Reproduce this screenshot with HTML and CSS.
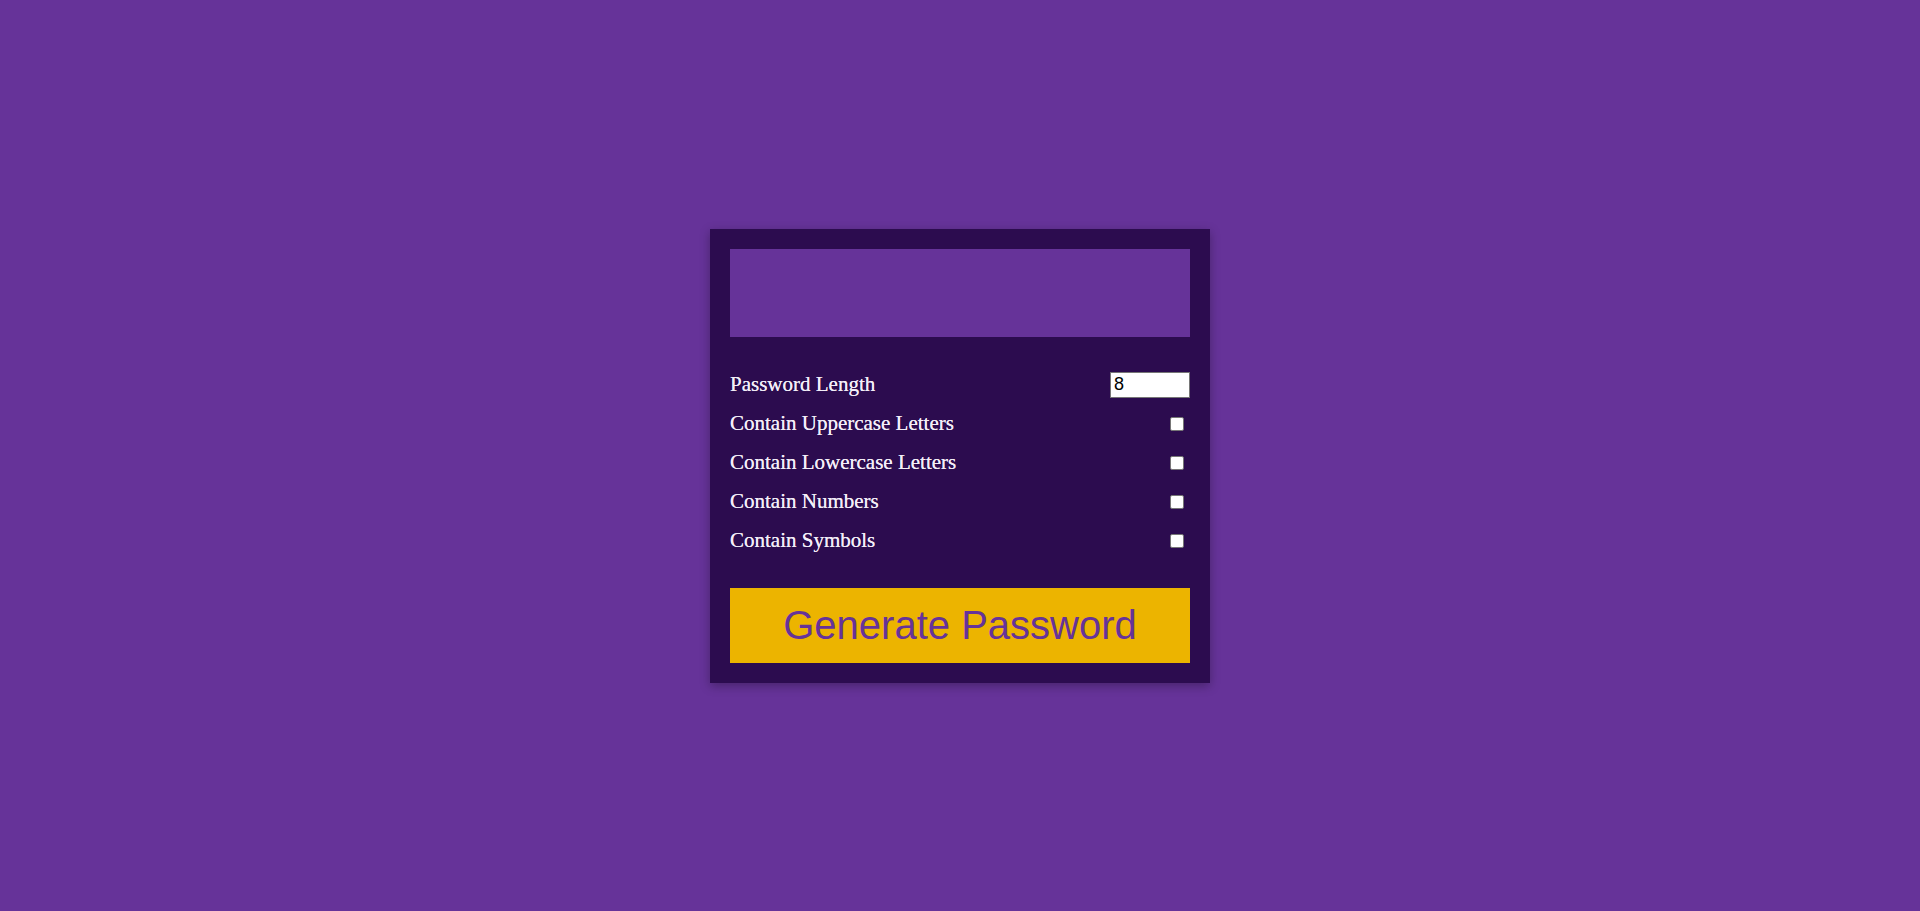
FILE: index.html
```html
<!DOCTYPE html>
<html lang="en">
<head>
<meta charset="UTF-8">
<title>Password Generator</title>
<link rel="stylesheet" href="styles.css">
</head>
<body>
<div class="container">
  <div class="result"></div>
  <div class="settings">
    <div class="setting">
      <label>Password Length</label>
      <input type="number" class="length" value="8" min="4" max="20">
    </div>
    <div class="setting">
      <label>Contain Uppercase Letters</label>
      <input type="checkbox" class="check">
    </div>
    <div class="setting">
      <label>Contain Lowercase Letters</label>
      <input type="checkbox" class="check">
    </div>
    <div class="setting">
      <label>Contain Numbers</label>
      <input type="checkbox" class="check">
    </div>
    <div class="setting">
      <label>Contain Symbols</label>
      <input type="checkbox" class="check">
    </div>
  </div>
  <button class="generate">Generate Password</button>
</div>
</body>
</html>
```
FILE: styles.css
```css
* { box-sizing: border-box; }
html, body { height: 100%; }
body {
  margin: 0;
  background: #663399;
  display: flex;
  align-items: center;
  justify-content: center;
  font-family: "Liberation Serif", "Times New Roman", serif;
}
.container {
  width: 500px;
  background: #2c0c4f;
  padding: 20px;
  box-shadow: 0 3px 10px rgba(0, 0, 0, 0.3);
}
.result {
  height: 88px;
  background: #663399;
}
.settings {
  margin-top: 35px;
  display: flex;
  flex-direction: column;
  gap: 13px;
}
.setting {
  height: 26px;
  display: flex;
  align-items: center;
  justify-content: space-between;
  color: #f3eef8;
  font-size: 21px;
  text-shadow: 0 0 0.4px #f3eef8;
}
.length {
  width: 80px;
  height: 26px;
  margin: 0;
  padding: 1px 3px;
  border: 1px solid #767676;
  font-family: "Liberation Sans", Arial, sans-serif;
  font-size: 18px;
  color: #000;
  background: #fff;
  text-shadow: none;
  -moz-appearance: textfield;
}
.length::-webkit-inner-spin-button,
.length::-webkit-outer-spin-button { -webkit-appearance: none; margin: 0; }
.check {
  -webkit-appearance: none;
  appearance: none;
  width: 14px;
  height: 14px;
  margin: 1px 6px 0 0;
  border: 1px solid #767676;
  border-radius: 2px;
  background: #fff;
}
.generate {
  display: block;
  width: 100%;
  height: 75px;
  margin-top: 34px;
  border: none;
  background: #ecb400;
  color: #663399;
  font-family: "Liberation Sans", Arial, sans-serif;
  font-size: 40px;
  cursor: pointer;
}
```
